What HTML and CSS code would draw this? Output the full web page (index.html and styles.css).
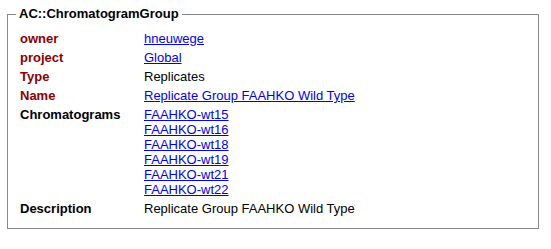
FILE: index.html
```html
<!DOCTYPE html>
<html>
<head>
<meta charset="utf-8">
<link rel="stylesheet" href="styles.css">
</head>
<body>
<fieldset class="box">
  <legend class="title">AC::ChromatogramGroup</legend>
  <div class="grid">
    <div class="label red">owner</div>
    <div class="value"><a href="#">hneuwege</a></div>
    <div class="label red">project</div>
    <div class="value"><a href="#">Global</a></div>
    <div class="label red">Type</div>
    <div class="value">Replicates</div>
    <div class="label red">Name</div>
    <div class="value"><a href="#">Replicate Group FAAHKO Wild Type</a></div>
    <div class="label">Chromatograms</div>
    <div class="value list">
      <a href="#">FAAHKO-wt15</a>
      <a href="#">FAAHKO-wt16</a>
      <a href="#">FAAHKO-wt18</a>
      <a href="#">FAAHKO-wt19</a>
      <a href="#">FAAHKO-wt21</a>
      <a href="#">FAAHKO-wt22</a>
    </div>
    <div class="label">Description</div>
    <div class="value">Replicate Group FAAHKO Wild Type</div>
  </div>
</fieldset>
</body>
</html>
```
FILE: styles.css
```css
html, body {
  background: #ffffff;
}
body {
  margin: 0;
  padding: 6px 0 0 7px;
  font-family: "Liberation Sans", Arial, sans-serif;
  font-size: 13px;
  color: #000;
}
.box {
  box-sizing: border-box;
  width: 532px;
  margin: 0;
  border: 1px solid #888888;
  border-radius: 0;
  padding: 9px 8px 12px 8px;
}
.title {
  font-size: 13px;
  line-height: 16px;
  font-weight: bold;
  padding: 0 3px;
}
.grid {
  display: grid;
  grid-template-columns: 124px 1fr;
  row-gap: 4px;
  padding-left: 4px;
  line-height: 15px;
}
.label {
  font-weight: bold;
}
.red {
  color: #8b0000;
}
.value a {
  color: #0000ee;
  text-decoration: underline;
}
.list {
  display: flex;
  flex-direction: column;
  align-items: flex-start;
}
```
